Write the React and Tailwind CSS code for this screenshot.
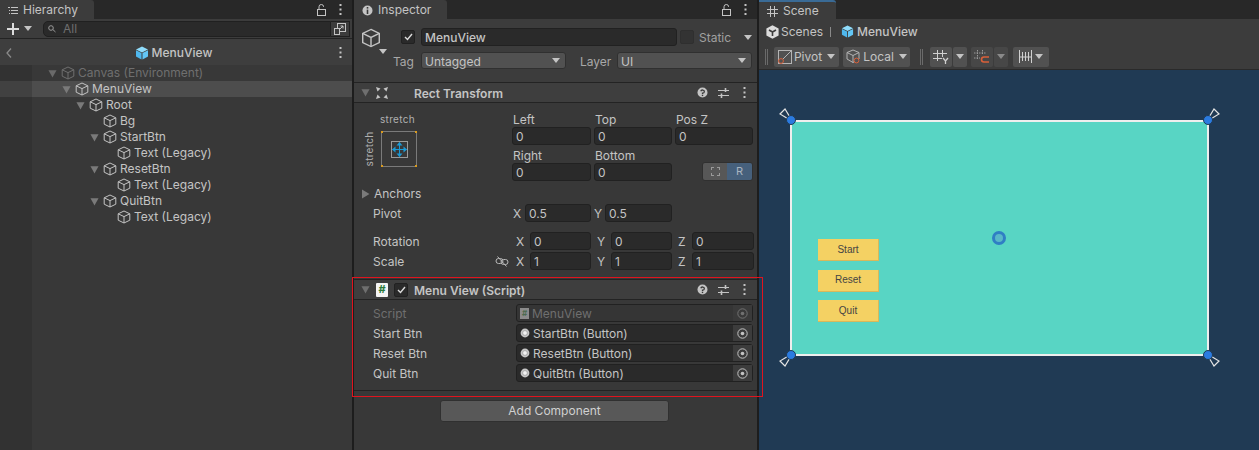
import React from 'react';

const Cube = ({ className = 'text-[#c4c4c4]', size = 14 }) => (
  <svg width={size} height={size} viewBox="0 0 14 14" fill="none" stroke="currentColor" strokeWidth="1" className={`shrink-0 ${className}`}>
    <path d="M7 1 L12.8 3.8 V10.2 L7 13 L1.2 10.2 V3.8 Z" />
    <path d="M1.2 3.8 L7 6.6 L12.8 3.8 M7 6.6 V13" />
  </svg>
);

const BlueCube = ({ size = 14 }) => (
  <svg width={size} height={size} viewBox="0 0 14 14" className="shrink-0">
    <path d="M7 0.5 L13 3.5 L7 6.5 L1 3.5 Z" fill="#8fdcfb" />
    <path d="M1 4.3 L6.5 7.1 V13.5 L1 10.6 Z" fill="#4fb8ee" />
    <path d="M13 4.3 L7.5 7.1 V13.5 L13 10.6 Z" fill="#63c6f5" />
  </svg>
);

const Arrow = ({ className = 'text-[#6f6f6f]', size = 9 }) => (
  <svg width={size} height={size} viewBox="0 0 10 10" className={`shrink-0 ${className}`}>
    <path d="M0.5 1.5 H9.5 L5 9.5 Z" fill="currentColor" />
  </svg>
);

const Caret = ({ className = 'text-[#c4c4c4]' }) => (
  <svg width="8" height="5" viewBox="0 0 8 5" className={`shrink-0 ${className}`}>
    <path d="M0 0 H8 L4 5 Z" fill="currentColor" />
  </svg>
);

const Dots = () => (
  <svg width="3" height="11" viewBox="0 0 3 11" className="shrink-0 text-[#c4c4c4]">
    <rect x="0.5" y="0" width="2" height="2" fill="currentColor" />
    <rect x="0.5" y="4.5" width="2" height="2" fill="currentColor" />
    <rect x="0.5" y="9" width="2" height="2" fill="currentColor" />
  </svg>
);

const Lock = () => (
  <svg width="9" height="12" viewBox="0 0 9 12" fill="none" stroke="#c4c4c4" className="shrink-0">
    <rect x="0.5" y="5.5" width="8" height="6" />
    <path d="M2 5 V2.8 A2.3 2.3 0 0 1 6.6 2.8" />
  </svg>
);

const Help = () => (
  <svg width="11" height="11" viewBox="0 0 11 11" className="shrink-0">
    <circle cx="5.5" cy="5.5" r="5" fill="#c4c4c4" />
    <path d="M3.8 4.2 A1.8 1.6 0 1 1 5.5 6.2 V7" fill="none" stroke="#383838" strokeWidth="1.3" />
    <rect x="4.8" y="7.7" width="1.4" height="1.4" fill="#383838" />
  </svg>
);

const Sliders = () => (
  <svg width="11" height="10" viewBox="0 0 11 10" fill="none" stroke="#c4c4c4" className="shrink-0">
    <path d="M0 2.5 H11 M0 7.5 H11" />
    <path d="M7.5 0 V4 M3.5 5.5 V10" strokeWidth="1.6" />
  </svg>
);

const Check = () => (
  <svg width="9" height="8" viewBox="0 0 9 8" fill="none" stroke="#dcdcdc" strokeWidth="1.4">
    <path d="M1 4 L3.5 6.5 L8 1" />
  </svg>
);

const Toggle = () => (
  <span className="flex h-[14px] w-[14px] shrink-0 items-center justify-center rounded-[2px] border border-[#212121] bg-[#2a2a2a]">
    <Check />
  </span>
);

const Tab = ({ width, icon, label, accent }) => (
  <div className={`flex h-[19px] shrink-0 items-center rounded-tr-[3px] bg-[#3c3c3c] pl-[8px] pt-px text-[12px] text-[#c4c4c4] ${width} ${accent ? 'border-t-2 border-[#3a6b96]' : ''}`}>
    {icon}
    <span className="ml-[5px] leading-none">{label}</span>
  </div>
);

const treeRows = [
  { label: 'Canvas (Environment)', pad: 'pl-[16px]', open: true, dim: true },
  { label: 'MenuView', pad: 'pl-[30px]', open: true, selected: true },
  { label: 'Root', pad: 'pl-[44px]', open: true },
  { label: 'Bg', pad: 'pl-[70px]' },
  { label: 'StartBtn', pad: 'pl-[58px]', open: true },
  { label: 'Text (Legacy)', pad: 'pl-[84px]' },
  { label: 'ResetBtn', pad: 'pl-[58px]', open: true },
  { label: 'Text (Legacy)', pad: 'pl-[84px]' },
  { label: 'QuitBtn', pad: 'pl-[58px]', open: true },
  { label: 'Text (Legacy)', pad: 'pl-[84px]' },
];

function Hierarchy() {
  return (
    <div className="flex h-full w-[352px] shrink-0 flex-col">
      <div className="flex h-[19px] items-center bg-[#282828]">
        <Tab
          width="w-[94px]"
          label="Hierarchy"
          icon={
            <svg width="10" height="9" viewBox="0 0 10 9" stroke="#c4c4c4" className="shrink-0">
              <path d="M3 1.5 H10 M3 4.5 H10 M3 7.5 H10 M0 1.5 H2 M1 4.5 H2 M1 7.5 H2" />
            </svg>
          }
        />
        <div className="ml-auto flex items-center gap-[13px] pr-[10px]">
          <Lock />
          <Dots />
        </div>
      </div>
      <div className="flex h-[20px] items-center border-b border-[#232323] bg-[#3c3c3c] pl-[7px]">
        <svg width="12" height="12" viewBox="0 0 12 12" className="shrink-0">
          <path d="M5 0 H7 V5 H12 V7 H7 V12 H5 V7 H0 V5 H5 Z" fill="#dcdcdc" />
        </svg>
        <Caret className="ml-[5px] text-[#c4c4c4]" />
        <div className="ml-[11px] flex h-[16px] w-[288px] items-center rounded-l-[5px] border border-[#202020] bg-[#2a2a2a] pl-[4px]">
          <svg width="10" height="8" viewBox="0 0 10 8" fill="none" stroke="#9a9a9a" className="shrink-0">
            <circle cx="3" cy="3" r="2.3" />
            <path d="M4.8 4.5 L7.5 7" />
          </svg>
          <span className="ml-[5px] text-[12px] leading-none text-[#6f6f6f]">All</span>
        </div>
        <div className="flex h-[16px] w-[19px] items-center justify-center border border-l-0 border-[#202020] bg-[#3c3c3c]">
          <svg width="12" height="12" viewBox="0 0 12 12" fill="none" stroke="#c4c4c4">
            <rect x="3.5" y="0.5" width="8" height="8" />
            <rect x="0.5" y="5.5" width="5" height="6" fill="#3c3c3c" />
            <path d="M5 7 L9 3 M6.5 3 H9 V5.5" />
          </svg>
        </div>
      </div>
      <div className="flex h-[26px] items-center bg-[#3e3e3e] pl-[6px] pr-[10px] pt-px">
        <svg width="6" height="10" viewBox="0 0 6 10" fill="none" stroke="#8a8a8a" strokeWidth="1.3" className="shrink-0">
          <path d="M5 0.5 L1 5 L5 9.5" />
        </svg>
        <div className="flex flex-1 items-center justify-center gap-[3px] pr-[4px] text-[12px] font-medium text-[#c4c4c4]">
          <BlueCube />
          <span className="leading-none">MenuView</span>
        </div>
        <Dots />
      </div>
      <div className="flex flex-1 flex-col bg-[#383838]">
        {treeRows.map((row, i) => (
          <div key={i} className="flex h-4 shrink-0">
            <div className={`w-8 shrink-0 ${row.selected ? 'bg-[#414141]' : 'bg-[#323232]'}`} />
            <div className={`flex flex-1 items-center text-[12px] ${row.pad} ${row.selected ? 'bg-[#4d4d4d]' : ''} ${row.dim ? 'text-[#6f6f6f]' : 'text-[#c4c4c4]'}`}>
              {row.open && <Arrow className={row.dim ? 'mr-[3px] text-[#6a6a6a]' : 'mr-[3px] text-[#7a7a7a]'} />}
              <span className="ml-[1px]">
                <Cube className={row.dim ? 'text-[#6f6f6f]' : 'text-[#c4c4c4]'} />
              </span>
              <span className="ml-[3px] leading-none">{row.label}</span>
            </div>
          </div>
        ))}
        <div className="flex flex-1">
          <div className="w-8 bg-[#323232]" />
        </div>
      </div>
    </div>
  );
}

const Field = ({ value, className = '', dim }) => (
  <div className={`flex h-[18px] items-center rounded-[3px] border border-[#212121] bg-[#2a2a2a] pl-[3px] pt-[2px] text-[12px] leading-none text-[#c4c4c4] ${className} ${dim ? 'opacity-50' : ''}`}>
    {value}
  </div>
);

const Select = ({ value, className = '' }) => (
  <div className={`flex h-[17px] items-center justify-between rounded-[3px] border border-[#303030] bg-[#515151] pl-[3px] pr-[5px] text-[12px] leading-none text-[#c4c4c4] ${className}`}>
    <span className="pt-[2px]">{value}</span>
    <Caret />
  </div>
);

const CompHeader = ({ icon, title, check }) => (
  <div className="flex h-[21px] items-center border-y border-[#232323] bg-[#3e3e3e] pl-[7px] pr-[11px]">
    <Arrow className="text-[#6f6f6f]" />
    {icon}
    {check && (
      <span className="ml-[6px]">
        <Toggle />
      </span>
    )}
    <span className={`pt-[2px] text-[12px] font-semibold leading-none text-[#c4c4c4] ${check ? 'ml-[6px]' : 'ml-[26px]'}`}>{title}</span>
    <div className="ml-auto flex items-center gap-[10px]">
      <Help />
      <Sliders />
      <span className="ml-[4px] flex">
        <Dots />
      </span>
    </div>
  </div>
);

const Axis = ({ axis, value, axisW, fieldW }) => (
  <div className="flex items-center">
    <span className={`pt-[2px] text-[12px] leading-none text-[#c4c4c4] ${axisW}`}>{axis}</span>
    <Field value={value} className={fieldW} />
  </div>
);

const Target = ({ dim }) => (
  <svg width="11" height="11" viewBox="0 0 11 11" fill="none" className={dim ? 'opacity-40' : ''}>
    <circle cx="5.5" cy="5.5" r="4.7" stroke="#c4c4c4" />
    <circle cx="5.5" cy="5.5" r="1.8" fill="#c4c4c4" />
  </svg>
);

const RefRow = ({ label, value, icon, dim }) => (
  <div className="flex h-[18px] items-center pl-[19px]">
    <span className={`w-[143px] shrink-0 pt-[2px] text-[12px] leading-none ${dim ? 'text-[#6f6f6f]' : 'text-[#c4c4c4]'}`}>{label}</span>
    <div className={`flex h-[18px] w-[237px] items-center rounded-[3px] border border-[#212121] pl-[3px] ${dim ? 'bg-[#353535]' : 'bg-[#2a2a2a]'}`}>
      {icon}
      <span className={`ml-[3px] pt-[2px] text-[12px] leading-none ${dim ? 'text-[#6f6f6f]' : 'text-[#c4c4c4]'}`}>{value}</span>
      <div className={`ml-auto flex h-full w-[19px] items-center justify-center ${dim ? 'bg-[#3a3a3a]' : 'bg-[#3c3c3c]'}`}>
        <Target dim={dim} />
      </div>
    </div>
  </div>
);

const Radio = () => (
  <svg width="10" height="10" viewBox="0 0 10 10" className="shrink-0">
    <circle cx="5" cy="5" r="4.4" fill="#c8c8c8" />
    <circle cx="5" cy="5" r="2.4" fill="#f2f2f2" stroke="#8c8c8c" strokeWidth="0.6" />
  </svg>
);

const AnchorWidget = () => (
  <div className="relative flex h-[36px] w-[36px] items-center justify-center border border-[#7a7a7a]">
    <span className="absolute -left-[1px] -top-[1px] h-[2px] w-[2px] bg-[#d99a1c]" />
    <span className="absolute -right-[1px] -top-[1px] h-[2px] w-[2px] bg-[#d99a1c]" />
    <span className="absolute -bottom-[1px] -left-[1px] h-[2px] w-[2px] bg-[#d99a1c]" />
    <span className="absolute -bottom-[1px] -right-[1px] h-[2px] w-[2px] bg-[#d99a1c]" />
    <div className="flex h-[17px] w-[17px] items-center justify-center border border-[#9a9a9a]">
      <svg width="15" height="15" viewBox="0 0 15 15" fill="#1a9ad6" stroke="#1a9ad6" className="shrink-0">
        <path d="M0.5 7.5 H14.5 M7.5 0.5 V14.5" fill="none" />
        <path d="M0 7.5 L3.5 4.5 V10.5 Z M15 7.5 L11.5 4.5 V10.5 Z M7.5 0 L4.5 3.5 H10.5 Z M7.5 15 L4.5 11.5 H10.5 Z" stroke="none" />
      </svg>
    </div>
  </div>
);

function Inspector() {
  return (
    <div className="ml-[2px] flex h-full w-[403px] shrink-0 flex-col bg-[#383838]">
      <div className="flex h-[19px] items-center bg-[#282828]">
        <Tab
          width="w-[93px]"
          label="Inspector"
          icon={
            <svg width="11" height="11" viewBox="0 0 11 11" className="shrink-0">
              <circle cx="5.5" cy="5.5" r="5" fill="#c4c4c4" />
              <rect x="4.7" y="2" width="1.6" height="1.6" fill="#383838" />
              <rect x="4.7" y="4.6" width="1.6" height="4.4" fill="#383838" />
            </svg>
          }
        />
        <div className="ml-auto flex items-center gap-[13px] pr-[10px]">
          <Lock />
          <Dots />
        </div>
      </div>

      <div className="flex h-[63px] bg-[#3c3c3c] pl-[7px] pr-[5px] pt-[9px]">
        <div className="relative h-[22px] w-[26px] shrink-0">
          <Cube size={20} className="text-[#c4c4c4]" />
          <span className="absolute left-[18px] top-[21px]">
            <Caret className="text-[#c4c4c4]" />
          </span>
        </div>
        <div className="flex flex-1 flex-col gap-[6px]">
          <div className="flex items-center">
            <span className="ml-[14px]">
              <Toggle />
            </span>
            <div className="ml-[6px] flex h-[18px] w-[256px] items-center rounded-[3px] border border-[#212121] bg-[#2a2a2a] pl-[3px] pt-[2px] text-[12px] font-medium leading-none text-[#c4c4c4]">
              MenuView
            </div>
            <span className="ml-[3px] h-[14px] w-[14px] rounded-[2px] border border-[#2f2f2f] bg-[#333333]" />
            <span className="ml-[5px] pt-[2px] text-[12px] leading-none text-[#a0a0a0]">Static</span>
            <Caret className="ml-[13px] text-[#c4c4c4]" />
          </div>
          <div className="flex items-center">
            <span className="w-[34px] pl-[6px] pt-[2px] text-[12px] leading-none text-[#a8a8a8]">Tag</span>
            <Select value="Untagged" className="w-[145px]" />
            <span className="ml-[14px] w-[37px] pt-[2px] text-[12px] leading-none text-[#a8a8a8]">Layer</span>
            <Select value="UI" className="w-[135px]" />
          </div>
        </div>
      </div>

      <CompHeader
        title="Rect Transform"
        icon={
          <svg width="12" height="12" viewBox="0 0 12 12" className="ml-[6px] shrink-0" fill="#c4c4c4">
            <path d="M0 0 L4.5 1.5 L1.5 4.5 Z M12 0 L7.5 1.5 L10.5 4.5 Z M0 12 L1.5 7.5 L4.5 10.5 Z M12 12 L10.5 7.5 L7.5 10.5 Z" />
          </svg>
        }
      />

      <div className="flex h-[78px] pl-[9px]">
        <div className="flex w-[149px] shrink-0 flex-col">
          <span className="mt-[11px] pl-[17px] text-[10px] leading-none tracking-[0.3px] text-[#b0b0b0]">stretch</span>
          <div className="mt-[7px] flex items-start">
            <span className="mr-[6px] flex h-[36px] w-[12px] items-center justify-center">
              <span className="rotate-[-90deg] text-[10px] leading-none tracking-[0.3px] text-[#b0b0b0]">stretch</span>
            </span>
            <AnchorWidget />
          </div>
        </div>
        <div className="grid w-[241px] grid-cols-[79px_78px_78px] content-start gap-x-[3px] pt-[10px]">
          {['Left', 'Top', 'Pos Z'].map((t) => (
            <span key={t} className="h-[14px] pl-[1px] pt-[1px] text-[12px] leading-none text-[#c4c4c4]">{t}</span>
          ))}
          {['0', '0', '0'].map((v, i) => (
            <Field key={i} value={v} />
          ))}
          <span className="flex h-[18px] items-center pl-[1px] pt-[4px] text-[12px] leading-none text-[#c4c4c4]">Right</span>
          <span className="flex h-[18px] items-center pl-[1px] pt-[4px] text-[12px] leading-none text-[#c4c4c4]">Bottom</span>
          <span className="h-[18px]" />
          <Field value="0" />
          <Field value="0" />
          <div className="-mt-px flex h-[19px] w-[51px] justify-self-end overflow-hidden rounded-[3px] border border-[#303030]">
            <span className="flex w-[24px] items-center justify-center bg-[#575757]">
              <span className="h-[9px] w-[9px] border border-dashed border-[#9a9a9a]" />
            </span>
            <span className="flex flex-1 items-center justify-center bg-[#46607c] text-[11px] leading-none text-[#a8b4c0]">R</span>
          </div>
        </div>
      </div>

      <div className="flex h-[23px] items-center pl-[7px] pt-[3px]">
        <svg width="9" height="10" viewBox="0 0 9 10" className="shrink-0">
          <path d="M1 0.5 L8.5 5 L1 9.5 Z" fill="#7a7a7a" />
        </svg>
        <span className="ml-[4px] text-[12px] leading-none text-[#c4c4c4]">Anchors</span>
      </div>
      <div className="flex h-[18px] items-center pl-[19px]">
        <span className="w-[140px] pt-[2px] text-[12px] leading-none text-[#c4c4c4]">Pivot</span>
        <div className="flex gap-[3px]">
          <Axis axis="X" value="0.5" axisW="w-[12px]" fieldW="w-[66px]" />
          <Axis axis="Y" value="0.5" axisW="w-[11px]" fieldW="w-[67px]" />
        </div>
      </div>
      <div className="mt-[10px] flex h-[18px] items-center pl-[19px]">
        <span className="w-[143px] pt-[2px] text-[12px] leading-none text-[#c4c4c4]">Rotation</span>
        <div className="flex gap-[6px]">
          <Axis axis="X" value="0" axisW="w-[14px]" fieldW="w-[61px]" />
          <Axis axis="Y" value="0" axisW="w-[14px]" fieldW="w-[61px]" />
          <Axis axis="Z" value="0" axisW="w-[14px]" fieldW="w-[62px]" />
        </div>
      </div>
      <div className="mt-[2px] flex h-[18px] items-center pl-[19px]">
        <span className="w-[122px] pt-[2px] text-[12px] leading-none text-[#c4c4c4]">Scale</span>
        <svg width="14" height="11" viewBox="0 0 14 11" fill="none" stroke="#b8b8b8" className="mr-[7px] shrink-0">
          <rect x="1" y="2.5" width="7" height="5" rx="2.5" />
          <rect x="6" y="3.5" width="7" height="5" rx="2.5" />
          <path d="M2.5 0.5 L11.5 10.5" />
        </svg>
        <div className="flex gap-[6px]">
          <Axis axis="X" value="1" axisW="w-[14px]" fieldW="w-[61px]" />
          <Axis axis="Y" value="1" axisW="w-[14px]" fieldW="w-[61px]" />
          <Axis axis="Z" value="1" axisW="w-[14px]" fieldW="w-[62px]" />
        </div>
      </div>

      <div className="mt-[9px]">
        <CompHeader
          title="Menu View (Script)"
          check
          icon={
            <span className="ml-[6px] flex h-[14px] w-[12px] shrink-0 items-center justify-center rounded-[1px] bg-[#f4f4f4] text-[11px] font-bold leading-none text-[#2b7a3a]">#</span>
          }
        />
      </div>
      <div className="flex flex-col gap-[2px] pt-[4px]">
        <RefRow
          dim
          label="Script"
          value="MenuView"
          icon={
            <span className="flex h-[11px] w-[9px] shrink-0 items-center justify-center bg-[#8c8c8c] text-[8px] font-bold leading-none text-[#4c6b50]">#</span>
          }
        />
        <RefRow label="Start Btn" value="StartBtn (Button)" icon={<Radio />} />
        <RefRow label="Reset Btn" value="ResetBtn (Button)" icon={<Radio />} />
        <RefRow label="Quit Btn" value="QuitBtn (Button)" icon={<Radio />} />
      </div>
      <div className="mt-[8px] h-px bg-[#232323]" />
      <div className="flex justify-center pr-[2px] pt-[9px]">
        <div className="flex h-[22px] w-[229px] items-center justify-center rounded-[3px] border border-[#303030] bg-[#585858] text-[12px] leading-none text-[#d0d0d0]">
          Add Component
        </div>
      </div>
    </div>
  );
}

const Handle = ({ className, rotate = '' }) => (
  <div className={`absolute h-4 w-4 ${className}`}>
    <svg width="16" height="16" viewBox="0 0 16 16" className={rotate}>
      <path d="M9.5 11.5 L11.5 9.5 L7 2 L2 7 Z" fill="#203a54" stroke="#e4e4e4" strokeWidth="1.2" />
    </svg>
  </div>
);

const Dot = ({ className }) => (
  <span className={`absolute h-[10px] w-[10px] rounded-full border border-[#203a54] bg-[#2b7be0] ${className}`} />
);

const ToolBtn = ({ children, className = 'bg-[#515151]' }) => (
  <div className={`flex h-[20px] items-center justify-center rounded-[2px] text-[12px] leading-none text-[#c4c4c4] ${className}`}>
    {children}
  </div>
);

const Grip = () => <span className="block h-[16px] w-[3px] border-x border-[#6a6a6a]" />;

const GameBtn = ({ label }) => (
  <div className="flex h-[22px] w-[61px] items-center justify-center border-b border-r border-[#d8b85a] bg-[#f4d163] font-['Liberation_Sans',sans-serif] text-[10px] leading-none text-[#444444]">
    {label}
  </div>
);

function Scene() {
  return (
    <div className="ml-[2px] flex h-full flex-1 flex-col bg-[#3c3c3c]">
      <div className="flex h-[19px] items-start bg-[#282828]">
        <Tab
          accent
          width="w-[77px]"
          label="Scene"
          icon={
            <svg width="11" height="11" viewBox="0 0 11 11" stroke="#c4c4c4" className="shrink-0">
              <path d="M3.5 0 V11 M7.5 0 V11 M0 3.5 H11 M0 7.5 H11" />
            </svg>
          }
        />
      </div>
      <div className="flex h-[25px] items-center bg-[#3c3c3c] pl-[7px] text-[12px] leading-none text-[#c4c4c4]">
        <svg width="13" height="14" viewBox="0 0 13 14" className="shrink-0">
          <path d="M6.5 0.3 L12.6 3.6 V10.4 L6.5 13.7 L0.4 10.4 V3.6 Z" fill="#dcdcdc" />
          <path d="M6.5 7 L6.5 11 M6.5 7 L3 5 M6.5 7 L10 5" stroke="#3c3c3c" strokeWidth="1.6" />
        </svg>
        <span className="ml-[2px]">Scenes</span>
        <span className="ml-[7px] h-[10px] w-px bg-[#8a8a8a]" />
        <span className="ml-[10px]">
          <BlueCube size={13} />
        </span>
        <span className="ml-[3px] font-medium">MenuView</span>
      </div>
      <div className="flex h-[26px] items-center gap-[4px] border-b border-[#2a2a2a] bg-[#3c3c3c] pl-[6px]">
        <Grip />
        <ToolBtn className="ml-[2px] w-[65px] gap-[2px] bg-[#515151]">
          <svg width="14" height="14" viewBox="0 0 14 14" fill="none" stroke="#b4b4b4" className="shrink-0">
            <rect x="0.5" y="0.5" width="13" height="13" />
            <path d="M2 12 L13 1" />
            <circle cx="3" cy="11" r="2.4" stroke="#d9603a" fill="#515151" />
          </svg>
          Pivot
          <Caret className="ml-[3px]" />
        </ToolBtn>
        <ToolBtn className="w-[67px] gap-[2px] bg-[#515151]">
          <svg width="15" height="15" viewBox="0 0 15 15" fill="none" stroke="#b4b4b4" className="shrink-0">
            <path d="M7 1 L13 3.5 V10 L7 13.5 L1 10 V3.5 Z M1 3.5 L7 6.5 L13 3.5 M7 6.5 V13.5" />
            <circle cx="10.5" cy="11.5" r="2.4" stroke="#d9603a" fill="#515151" />
          </svg>
          Local
          <Caret className="ml-[3px]" />
        </ToolBtn>
        <span className="ml-[6px]">
          <Grip />
        </span>
        <div className="ml-[3px] flex gap-px">
          <ToolBtn className="w-[22px] bg-[#515151]">
            <svg width="16" height="14" viewBox="0 0 16 14" fill="none" stroke="#d0d0d0" className="shrink-0">
              <path d="M4.5 0 V11 M9.5 0 V7 M0 3.5 H14 M0 8.5 H9" />
              <path d="M10 8 L12.5 11 L15 8 M12.5 11 V14" strokeWidth="1.3" />
            </svg>
          </ToolBtn>
          <ToolBtn className="w-[14px] bg-[#515151]">
            <Caret />
          </ToolBtn>
        </div>
        <div className="flex gap-px">
          <ToolBtn className="w-[22px] bg-[#474747]">
            <svg width="16" height="14" viewBox="0 0 16 14" fill="none" className="shrink-0">
              <path d="M3.5 0 V10 M8.5 0 V5 M0 3 H12 M0 8 H6" stroke="#9a9a9a" strokeDasharray="1.5 1" />
              <path d="M15 7 H10 A2.5 2.5 0 0 0 10 12 H15" stroke="#d9603a" strokeWidth="1.6" />
            </svg>
          </ToolBtn>
          <ToolBtn className="w-[14px] bg-[#474747]">
            <Caret className="text-[#8a8a8a]" />
          </ToolBtn>
        </div>
        <ToolBtn className="ml-[1px] w-[36px] gap-[3px] bg-[#515151]">
          <svg width="13" height="13" viewBox="0 0 13 13" fill="none" stroke="#d0d0d0" className="shrink-0">
            <path d="M0.5 0 V13 M3.5 2 V11 M6.5 2 V11 M9.5 2 V11 M12.5 0 V13 M0 7 H13" />
          </svg>
          <Caret />
        </ToolBtn>
      </div>
      <div className="relative flex-1 overflow-hidden bg-[#203a54]">
        <div className="absolute left-[31px] top-[50px] h-[236px] w-[419px] border-2 border-[#eeeeee] bg-[#58d5c4]">
          <div className="absolute left-[26px] top-[117px] flex flex-col gap-[8.5px]">
            <GameBtn label="Start" />
            <GameBtn label="Reset" />
            <GameBtn label="Quit" />
          </div>
          <span className="absolute left-[200px] top-[109px] h-[14px] w-[14px] rounded-full border-[3px] border-[#2f7fc4] bg-[#58b8c8]" />
        </div>
        <Handle className="left-[19px] top-[37px]" />
        <Handle className="left-[446px] top-[37px]" rotate="rotate-90" />
        <Handle className="left-[19px] top-[282px]" rotate="-rotate-90" />
        <Handle className="left-[446px] top-[282px]" rotate="rotate-180" />
        <Dot className="left-[27px] top-[45px]" />
        <Dot className="left-[444px] top-[45px]" />
        <Dot className="left-[27px] top-[280px]" />
        <Dot className="left-[444px] top-[280px]" />
      </div>
    </div>
  );
}

export default function App() {
  return (
    <div className="relative flex h-[450px] w-[1259px] overflow-hidden bg-[#1d1d1d] font-['Inter','Noto_Sans',sans-serif]">
      <Hierarchy />
      <Inspector />
      <Scene />
      {/* red annotation box from the screenshot */}
      <div className="pointer-events-none absolute left-[352px] top-[277px] h-[120px] w-[411px] border border-[#e0141e]" />
    </div>
  );
}
